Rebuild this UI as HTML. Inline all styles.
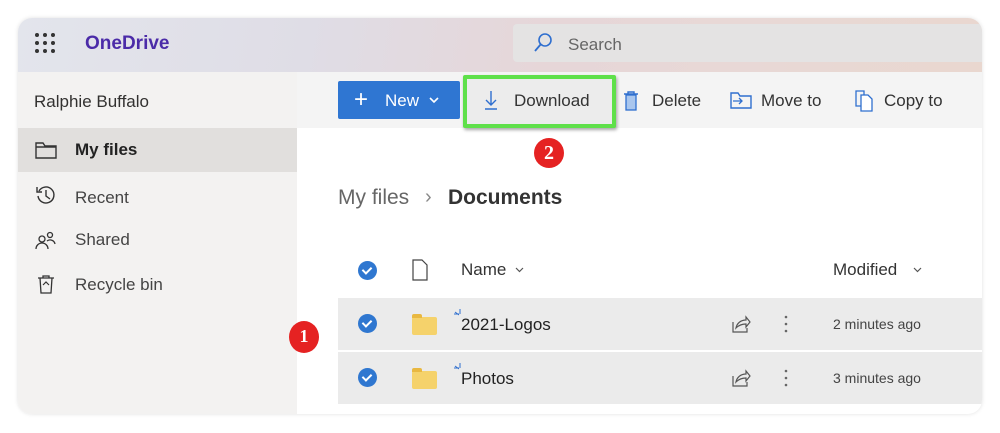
<!DOCTYPE html>
<html><head><meta charset="utf-8"><style>
*{margin:0;padding:0;box-sizing:border-box}
body{width:1000px;height:433px;background:#fff;font-family:"Liberation Sans",sans-serif;position:relative;overflow:hidden;color:#323130}
.card{position:absolute;left:18px;top:18px;width:964px;height:396px;border-radius:14px;overflow:hidden;background:#fff;box-shadow:0 0 4px rgba(0,0,0,.12)}
.hdr{position:absolute;left:0;top:0;width:964px;height:54px;background:linear-gradient(100deg,#e3e5ec 0%,#dfdde6 30%,#e6d6d8 55%,#e8d8d6 75%,#e9d7cf 100%)}
.abs{position:absolute}
.side{position:absolute;left:0;top:54px;width:279px;height:342px;background:#f3f2f1}
.cmd{position:absolute;left:279px;top:54px;width:685px;height:56px;background:#f4f4f4}
.t{position:absolute;white-space:nowrap}
.row{position:absolute;left:320px;width:644px;height:52px;background:#ebebeb}
.chk{position:absolute;width:19px;height:19px;border-radius:50%;background:#2f77d0}
.chk:after{content:"";position:absolute;left:6px;top:4px;width:4px;height:7px;border:solid #fff;border-width:0 2px 2px 0;transform:rotate(45deg)}
.fold{position:absolute;width:25px;height:18px;background:#f5d26b;border-radius:2px}
.fold:before{content:"";position:absolute;left:0;top:-3px;width:10px;height:4px;background:#e9b841;border-radius:2px 2px 0 0}
.badge{position:absolute;width:30px;height:30px;border-radius:50%;background:#e52222;color:#fff;font-family:"Liberation Serif",serif;font-size:20px;font-weight:bold;text-align:center;line-height:30px}
</style></head><body>
<div class="card">
<div class="hdr"></div>
<svg class="abs" style="left:16px;top:14px" width="22" height="22"><g fill="#333"><circle cx="3" cy="3" r="2"/><circle cx="11" cy="3" r="2"/><circle cx="19" cy="3" r="2"/><circle cx="3" cy="11" r="2"/><circle cx="11" cy="11" r="2"/><circle cx="19" cy="11" r="2"/><circle cx="3" cy="19" r="2"/><circle cx="11" cy="19" r="2"/><circle cx="19" cy="19" r="2"/></g></svg>
<div class="t" style="left:67px;top:15px;font-size:19px;color:#4b2ba8;font-weight:bold">OneDrive</div>
<div class="abs" style="left:495px;top:6px;width:469px;height:38px;background:#e4e3e3;border-radius:4px 0 0 4px"></div>
<svg class="abs" style="left:514px;top:14px" width="22" height="22"><circle cx="13" cy="8" r="6" fill="none" stroke="#2f6fcf" stroke-width="1.6"/><path d="M9 12 L3 19" stroke="#2f6fcf" stroke-width="1.8"/></svg>
<div class="t" style="left:550px;top:17px;font-size:17px;color:#666">Search</div>
<div class="side"></div>
<div class="cmd"></div>
<div class="t" style="left:16px;top:74px;font-size:17px">Ralphie Buffalo</div>
<div class="abs" style="left:0;top:110px;width:279px;height:44px;background:#e1dfdd"></div>
<svg class="abs" style="left:17px;top:123px" width="22" height="18"><path d="M1 2h7l2 3h11v12H1z M1 6h20" fill="none" stroke="#333" stroke-width="1.4"/></svg>
<div class="t" style="left:57px;top:122px;font-size:17px;font-weight:bold;color:#222">My files</div>
<svg class="abs" style="left:17px;top:166px" width="22" height="22"><path d="M4 7 A8 8 0 1 1 3 12" fill="none" stroke="#333" stroke-width="1.4"/><path d="M2 3v5h5" fill="none" stroke="#333" stroke-width="1.4"/><path d="M11 6v6l4 3" fill="none" stroke="#333" stroke-width="1.4"/></svg>
<div class="t" style="left:57px;top:170px;font-size:17px;color:#444">Recent</div>
<svg class="abs" style="left:17px;top:212px" width="22" height="22"><circle cx="7" cy="9" r="3" fill="none" stroke="#333" stroke-width="1.3"/><path d="M1 19 a6 6 0 0 1 12 0" fill="none" stroke="#333" stroke-width="1.3"/><circle cx="15" cy="5" r="2.5" fill="none" stroke="#333" stroke-width="1.3"/><path d="M12 11 a5 5 0 0 1 8 3" fill="none" stroke="#333" stroke-width="1.3"/></svg>
<div class="t" style="left:57px;top:212px;font-size:17px;color:#444">Shared</div>
<svg class="abs" style="left:18px;top:256px" width="20" height="22"><path d="M2 4h16 M4 4l1 15h10l1-15 M7 4V2h6v2" fill="none" stroke="#333" stroke-width="1.3"/><path d="M7 11l3-3 3 3" fill="none" stroke="#333" stroke-width="1.2"/></svg>
<div class="t" style="left:57px;top:257px;font-size:17px;color:#444">Recycle bin</div>
<div class="abs" style="left:320px;top:63px;width:122px;height:38px;background:#2f76d2;border-radius:2px"></div>
<div class="t" style="left:336px;top:68px;font-size:24px;color:#fff">+</div>
<div class="t" style="left:367px;top:73px;font-size:17px;color:#fff">New</div>
<svg class="abs" style="left:411px;top:79px" width="10" height="7"><path d="M1 1l4 4 4-4" fill="none" stroke="#fff" stroke-width="1.6"/></svg>
<div class="abs" style="left:445px;top:57px;width:153px;height:53px;border:4px solid #5fe04a;border-radius:2px;box-shadow:1px 2px 3px rgba(0,0,0,.35);background:#ececec"></div>
<svg class="abs" style="left:466px;top:72px" width="14" height="20"><path d="M7 1v14 M2 10l5 5 5-5 M1 19h12" fill="none" stroke="#2f6fcf" stroke-width="1.4"/></svg>
<div class="t" style="left:496px;top:73px;font-size:17px;color:#333">Download</div>
<svg class="abs" style="left:605px;top:72px" width="16" height="22"><path d="M1 4h14 M5 4V2h6v2" stroke="#2f6fcf" stroke-width="1.4" fill="none"/><rect x="3" y="5" width="10" height="15" fill="#a9c6ee" stroke="#2f6fcf" stroke-width="1.3"/></svg>
<div class="t" style="left:634px;top:73px;font-size:17px;color:#333">Delete</div>
<svg class="abs" style="left:712px;top:74px" width="22" height="17"><path d="M1 1h7l2 3h11v12H1z" fill="none" stroke="#2f6fcf" stroke-width="1.4"/><path d="M3 9h9 M9 6l3 3-3 3" fill="none" stroke="#2f6fcf" stroke-width="1.3"/></svg>
<div class="t" style="left:743px;top:73px;font-size:17px;color:#333">Move to</div>
<svg class="abs" style="left:836px;top:72px" width="20" height="22"><path d="M2 1h8v15H2z" fill="none" stroke="#2f6fcf" stroke-width="1.3"/><path d="M7 5h7l4 4v12H7z" fill="#fff" stroke="#2f6fcf" stroke-width="1.3"/></svg>
<div class="t" style="left:866px;top:73px;font-size:17px;color:#333">Copy to</div>
<div class="badge" style="left:516px;top:120px">2</div>
<div class="t" style="left:320px;top:168px;font-size:21px;color:#666">My files</div>
<div class="t" style="left:407px;top:168px;font-size:20px;color:#888">›</div>
<div class="t" style="left:430px;top:168px;font-size:21px;font-weight:bold;color:#333">Documents</div>
<div class="chk" style="left:340px;top:243px"></div>
<svg class="abs" style="left:394px;top:241px" width="16" height="22"><path d="M1 1h9l5 5v15H1z" fill="none" stroke="#444" stroke-width="1.2"/></svg>
<div class="t" style="left:443px;top:242px;font-size:17px;color:#333">Name</div>
<svg class="abs" style="left:497px;top:249px" width="9" height="6"><path d="M1 1l3.5 3.5L8 1" fill="none" stroke="#555" stroke-width="1.2"/></svg>
<div class="t" style="left:815px;top:242px;font-size:17px;color:#333">Modified</div>
<svg class="abs" style="left:895px;top:249px" width="9" height="6"><path d="M1 1l3.5 3.5L8 1" fill="none" stroke="#555" stroke-width="1.2"/></svg>
<div class="row" style="top:280px"></div>
<div class="row" style="top:334px"></div>
<div class="badge" style="left:271px;top:303px;width:30px;height:32px;font-size:18px">1</div>
<div class="chk" style="left:340px;top:296px"></div>
<div class="fold" style="left:394px;top:299px"></div>
<div class="t" style="left:443px;top:297px;font-size:17px;color:#222">2021-Logos</div>
<div class="chk" style="left:340px;top:350px"></div>
<div class="fold" style="left:394px;top:353px"></div>
<div class="t" style="left:443px;top:351px;font-size:17px;color:#222">Photos</div>
<svg class="abs" style="left:436px;top:290px" width="10" height="10"><path d="M6 1v5 M1 4l4 3 M0 6h5" stroke="#2f6fcf" stroke-width="1"/></svg>
<svg class="abs" style="left:436px;top:344px" width="10" height="10"><path d="M6 1v5 M1 4l4 3 M0 6h5" stroke="#2f6fcf" stroke-width="1"/></svg>
<svg class="abs" style="left:713px;top:296px" width="20" height="20"><path d="M2 8v10h14v-4 M5 14c1-5 5-8 10-8V3l4 5-4 5V10c-4 0-7 1-10 4z" fill="none" stroke="#555" stroke-width="1.2"/></svg>
<svg class="abs" style="left:713px;top:350px" width="20" height="20"><path d="M2 8v10h14v-4 M5 14c1-5 5-8 10-8V3l4 5-4 5V10c-4 0-7 1-10 4z" fill="none" stroke="#555" stroke-width="1.2"/></svg>
<svg class="abs" style="left:765px;top:296px" width="6" height="20"><g fill="#666"><circle cx="3" cy="3" r="1.3"/><circle cx="3" cy="10" r="1.3"/><circle cx="3" cy="17" r="1.3"/></g></svg>
<svg class="abs" style="left:765px;top:350px" width="6" height="20"><g fill="#666"><circle cx="3" cy="3" r="1.3"/><circle cx="3" cy="10" r="1.3"/><circle cx="3" cy="17" r="1.3"/></g></svg>
<div class="t" style="left:815px;top:298px;font-size:14px;color:#444">2 minutes ago</div>
<div class="t" style="left:815px;top:352px;font-size:14px;color:#444">3 minutes ago</div>
</div>
</body></html>
